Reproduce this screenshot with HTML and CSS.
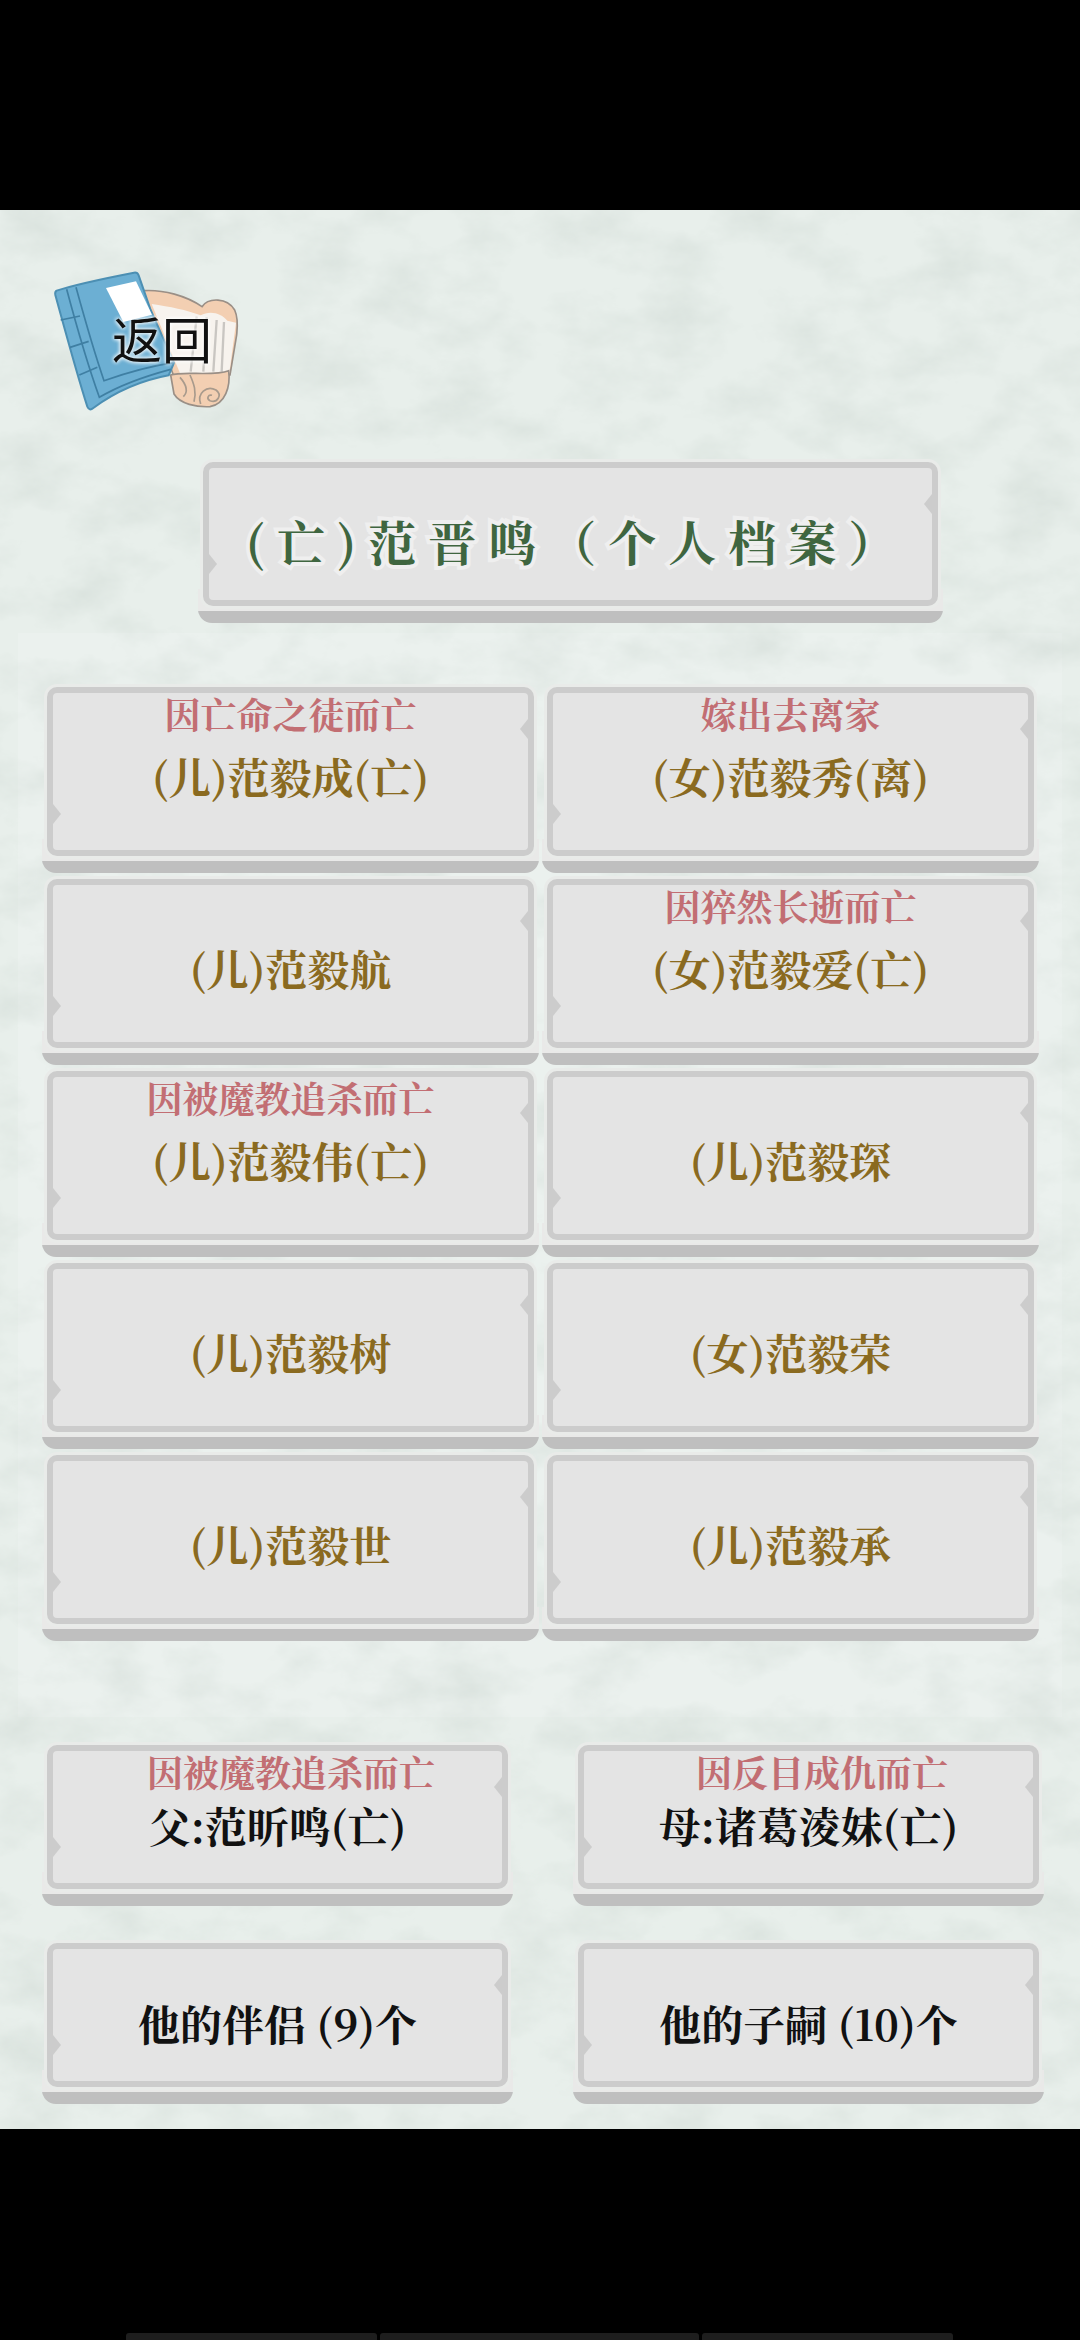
FILE: index.html
```html
<!DOCTYPE html>
<html lang="zh-CN">
<head>
    <meta charset="UTF-8">
    <meta name="viewport" content="width=device-width, initial-scale=1.0">
    <title>个人档案</title>
    <link rel="stylesheet" href="styles.css">
</head>
<body>
    <div class="top-bar"></div>

    <div class="screen">
        <svg class="paper" width="1080" height="1919" aria-hidden="true">
            <filter id="paper-grain" x="0" y="0" width="100%" height="100%">
                <feTurbulence type="fractalNoise" baseFrequency="0.014 0.022" numOctaves="6" seed="7"/>
                <feColorMatrix type="matrix" values="0 0 0 0 0.60  0 0 0 0 0.67  0 0 0 0 0.63  0 0 0.9 0 -0.36"/>
            </filter>
            <rect width="1080" height="1919" filter="url(#paper-grain)"/>
        </svg>

        <div class="back">
            <svg class="back-icon" width="210" height="160" viewBox="0 0 630 480" aria-hidden="true">
                <path class="scroll" d="M310 92 C370 88 440 108 486 140 C505 112 562 112 584 150 C596 176 592 205 590 225 L570 345 L400 345 L330 150 Z"/>
                <path class="pages" d="M335 132 C390 140 440 150 482 166 C510 150 545 160 562 182 L588 188 L568 338 L420 340 Z"/>
                <path class="page-line" d="M470 170 L452 335 M500 172 L490 335 M530 180 L520 335 M552 186 L545 335"/>
                <path class="scroll" d="M392 345 C430 332 520 350 566 332 C572 380 556 432 510 440 C470 442 420 432 402 402 Z"/>
                <path class="page-line curl" d="M420 352 C440 375 445 395 430 410 M450 345 C462 372 470 395 462 425 M482 432 C470 400 500 375 528 390 C548 405 532 430 510 422 C498 416 505 402 516 406"/>
                <path class="cover" d="M50 92 C110 72 220 50 282 38 Q292 36 296 46 L332 150 L402 308 L386 346 C300 362 220 400 160 444 Q148 454 142 440 C110 340 75 210 46 105 Q44 95 50 92 Z"/>
                <path class="cover-line" d="M80 88 C110 200 145 320 178 412 C240 375 310 350 392 328 M108 82 C135 180 160 270 192 362 C250 342 320 320 400 308"/>
                <path class="cover-line" d="M62 180 L120 168 M90 262 L146 244 M118 345 L172 322"/>
                <path class="label" d="M198 84 L288 64 L336 164 L250 186 Z"/>
            </svg>
            <span class="back-label">返回</span>
        </div>

        <div class="card title-card">
            <div class="face">
                <h1 class="title">(亡)范晋鸣（个人档案）</h1>
            </div>
        </div>

        <div class="panel">
            <div class="child-grid">
                <div class="card">
                    <div class="face">
                        <div class="note">因亡命之徒而亡</div>
                        <div class="name">(儿)范毅成(亡)</div>
                    </div>
                </div>
                <div class="card">
                    <div class="face">
                        <div class="note">嫁出去离家</div>
                        <div class="name">(女)范毅秀(离)</div>
                    </div>
                </div>
                <div class="card">
                    <div class="face">
                        <div class="note"></div>
                        <div class="name">(儿)范毅航</div>
                    </div>
                </div>
                <div class="card">
                    <div class="face">
                        <div class="note">因猝然长逝而亡</div>
                        <div class="name">(女)范毅爱(亡)</div>
                    </div>
                </div>
                <div class="card">
                    <div class="face">
                        <div class="note">因被魔教追杀而亡</div>
                        <div class="name">(儿)范毅伟(亡)</div>
                    </div>
                </div>
                <div class="card">
                    <div class="face">
                        <div class="note"></div>
                        <div class="name">(儿)范毅琛</div>
                    </div>
                </div>
                <div class="card">
                    <div class="face">
                        <div class="note"></div>
                        <div class="name">(儿)范毅树</div>
                    </div>
                </div>
                <div class="card">
                    <div class="face">
                        <div class="note"></div>
                        <div class="name">(女)范毅荣</div>
                    </div>
                </div>
                <div class="card">
                    <div class="face">
                        <div class="note"></div>
                        <div class="name">(儿)范毅世</div>
                    </div>
                </div>
                <div class="card">
                    <div class="face">
                        <div class="note"></div>
                        <div class="name">(儿)范毅承</div>
                    </div>
                </div>
            </div>
        </div>

        <div class="parent-grid">
            <div class="card">
                <div class="face">
                    <div class="note">因被魔教追杀而亡</div>
                    <div class="name dark">父:范昕鸣(亡)</div>
                </div>
            </div>
            <div class="card">
                <div class="face">
                    <div class="note">因反目成仇而亡</div>
                    <div class="name dark">母:诸葛淩妹(亡)</div>
                </div>
            </div>
            <div class="card">
                <div class="face">
                    <div class="note"></div>
                    <div class="name dark">他的伴侣 (9)个</div>
                </div>
            </div>
            <div class="card">
                <div class="face">
                    <div class="note"></div>
                    <div class="name dark">他的子嗣 (10)个</div>
                </div>
            </div>
        </div>
    </div>

    <div class="bottom-bar">
        <div class="nav-piece"></div>
        <div class="nav-piece wide"></div>
        <div class="nav-piece"></div>
    </div>
</body>
</html>
```

FILE: styles.css
```css
* {
    box-sizing: border-box;
}
body {
    margin: 0;
    width: 1080px;
    height: 2340px;
    overflow: hidden;
    background: #000;
    font-family: "Noto Serif CJK SC", "Liberation Serif", "Noto Sans CJK SC", serif;
}
.top-bar {
    height: 210px;
    background: #000;
}
.bottom-bar {
    height: 211px;
    background: #000;
    padding: 204px 126px 0;
    display: flex;
    gap: 3px;
}
.nav-piece {
    width: 251px;
    height: 7px;
    background: #1e1e1e;
    border-radius: 3px 3px 0 0;
}
.nav-piece.wide {
    width: 319px;
}
.screen {
    position: relative;
    height: 1919px;
    padding-top: 50px;
    overflow: hidden;
    background: #e8efeb;
}
.paper {
    position: absolute;
    top: 0;
    left: 0;
}
.back {
    position: relative;
    width: 210px;
    height: 160px;
    margin-left: 40px;
}
.back-icon {
    display: block;
    filter: blur(0.6px);
}
.back-label {
    position: absolute;
    top: 44px;
    left: 72px;
    font-family: "Noto Sans CJK SC", sans-serif;
    font-size: 50px;
    line-height: 66px;
    color: #111;
    text-shadow: 0 0 4px #fff, 0 0 4px #fff;
}
.scroll {
    fill: #f3cfb2;
    stroke: #9a8f86;
    stroke-width: 5;
}
.pages {
    fill: #f7f3ee;
}
.page-line {
    fill: none;
    stroke: #c9c6c2;
    stroke-width: 7;
}
.page-line.curl {
    stroke: #a89a8c;
    stroke-width: 5;
}
.cover {
    fill: #6cafd3;
    stroke: #4c8fb3;
    stroke-width: 6;
}
.cover-line {
    fill: none;
    stroke: #3f7fa3;
    stroke-width: 5;
}
.label {
    fill: #fff;
}
.card {
    position: relative;
    padding: 2px 5px 17px;
    border-radius: 0 0 14px 14px;
    background: linear-gradient(transparent calc(100% - 34px), #e9e9e8 calc(100% - 34px), #e9e9e8 calc(100% - 12px), #bfbfbf calc(100% - 12px));
}
.face {
    position: relative;
    height: 100%;
    padding-top: 1px;
    border: 6px solid #cccccc;
    border-radius: 10px;
    background: #e4e4e4;
    box-shadow: 0 0 0 3px #e9ebe9;
    text-align: center;
}
.face::before,
.face::after {
    content: "";
    position: absolute;
    width: 8px;
    height: 20px;
    background: #cccccc;
}
.face::before {
    left: 0;
    bottom: 26px;
    clip-path: polygon(0 0, 100% 50%, 0 100%);
}
.face::after {
    right: 0;
    top: 26px;
    clip-path: polygon(100% 0, 0 50%, 100% 100%);
}
.title-card {
    width: 745px;
    height: 163px;
    margin: 40px 0 0 198px;
}
.title-card .face {
    padding: 43px 0 0 13px;
}
.title {
    margin: 0;
    font-size: 48px;
    font-weight: 700;
    line-height: 60px;
    letter-spacing: 12px;
    color: #3f6640;
    -webkit-text-stroke: 8px #efefef;
    paint-order: stroke fill;
}
.panel {
    width: 1044px;
    height: 1084px;
    margin: 10px 0 0 18px;
    padding: 52px 0 0 24px;
    background: rgba(255, 255, 255, 0.16);
}
.child-grid {
    display: grid;
    grid-template-columns: 497px 497px;
    grid-auto-rows: 188px;
    gap: 4px 3px;
}
.parent-grid {
    display: grid;
    grid-template-columns: 471px 471px;
    grid-auto-rows: 163px;
    gap: 35px 60px;
    margin: 26px 0 0 42px;
    position: relative;
}
.note {
    height: 40px;
    margin-bottom: 17px;
    font-size: 36px;
    font-weight: 700;
    line-height: 40px;
    color: #c26e73;
}
.name {
    font-size: 42px;
    font-weight: 700;
    line-height: 50px;
    color: #8a6a20;
}
.name.dark {
    color: #111;
}
.parent-grid .note {
    margin-bottom: 8px;
    padding-left: 27px;
}
```
